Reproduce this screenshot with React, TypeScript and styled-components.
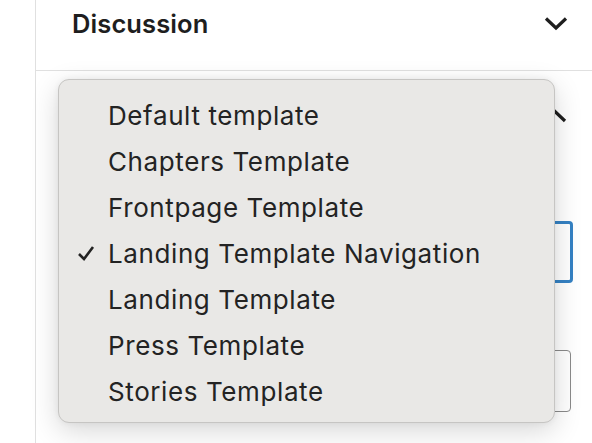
import { FC } from "react";
import styled, { createGlobalStyle } from "styled-components";

const GlobalStyle = createGlobalStyle`
  html, body {
    margin: 0;
    padding: 0;
    background: #fff;
    font-family: Inter, "Noto Sans", sans-serif;
    color: #1e1e1e;
  }
`;

const Page = styled.div`
  position: relative;
  display: flex;
  width: 592px;
  height: 443px;
  overflow: hidden;
`;

const Gutter = styled.div`
  width: 35px;
  flex: none;
`;

const Sidebar = styled.div`
  flex: 1;
  border-left: 1px solid #e0e0e0;
  display: flex;
  flex-direction: column;
`;

const PanelHeader = styled.div`
  flex: none;
  height: 71px;
  box-sizing: border-box;
  display: flex;
  align-items: flex-start;
  justify-content: space-between;
  padding: 8px 22px 0 36px;
  border-bottom: 1px solid #e0e0e0;
`;

const PanelTitle = styled.h2`
  margin: 0;
  font-size: 25.5px;
  line-height: 32px;
  font-weight: 600;
  letter-spacing: 0.1px;
  color: #1e1e1e;
`;

const Chevron = styled.svg`
  width: 26px;
  height: 26px;
  flex: none;
`;

const HeaderChevron = styled(Chevron)`
  margin-top: 4px;
`;

const PanelBody = styled.div`
  flex: none;
  display: flex;
  flex-direction: column;
  align-items: flex-end;
  padding: 34px 19px 0 0;
`;

const Toggle = styled(Chevron)`
  margin-right: 4px;
  margin-bottom: 90px;
`;

const SelectBox = styled.div<{ $focused?: boolean }>`
  flex: none;
  width: 480px;
  height: 62px;
  box-sizing: border-box;
  border-radius: 4px;
  border: ${(p) => (p.$focused ? "3px solid #3582c4" : "1.5px solid #8a8a8a")};
  margin-right: ${(p) => (p.$focused ? "0" : "2px")};
  margin-bottom: 67px;
`;

const Menu = styled.div`
  position: absolute;
  left: 58px;
  top: 79px;
  width: 497px;
  height: 344px;
  box-sizing: border-box;
  padding: 12px 0 0;
  background: #e9e8e6;
  border: 1px solid #c6c5c3;
  border-radius: 11px;
  box-shadow: 0 8px 28px rgba(0, 0, 0, 0.16), 0 0 6px rgba(0, 0, 0, 0.06);
`;

const Option = styled.div`
  position: relative;
  height: 46px;
  display: flex;
  align-items: center;
  padding-left: 49px;
  font-size: 26px;
  color: #232323;
  letter-spacing: 0.6px;
`;

const Check = styled.span`
  position: absolute;
  left: 18px;
  top: 50%;
  transform: translateY(-50%);
  display: flex;
`;

const options = [
  "Default template",
  "Chapters Template",
  "Frontpage Template",
  "Landing Template Navigation",
  "Landing Template",
  "Press Template",
  "Stories Template",
];

const App: FC = () => {
  return (
    <>
      <GlobalStyle />
      <Page>
        <Gutter />
        <Sidebar>
          <PanelHeader>
            <PanelTitle>Discussion</PanelTitle>
            <HeaderChevron viewBox="0 0 26 26">
              <path d="M2 6.5 L12 16 L22 6.5" fill="none" stroke="#1e1e1e" strokeWidth="3.2" />
            </HeaderChevron>
          </PanelHeader>
          <PanelBody>
            <Toggle viewBox="0 0 26 26">
              <path d="M2 16 L12 6.5 L22 16" fill="none" stroke="#1e1e1e" strokeWidth="3.2" />
            </Toggle>
            <SelectBox $focused />
            <SelectBox />
          </PanelBody>
        </Sidebar>
        <Menu>
          {options.map((o, i) => (
            <Option key={o}>
              {i === 3 && (
                <Check>
                  <svg width="18" height="16" viewBox="0 0 18 16">
                    <path d="M2 9 L7 14 L16 2" fill="none" stroke="#232323" strokeWidth="2.6" />
                  </svg>
                </Check>
              )}
              {o}
            </Option>
          ))}
        </Menu>
      </Page>
    </>
  );
};

export default App;
